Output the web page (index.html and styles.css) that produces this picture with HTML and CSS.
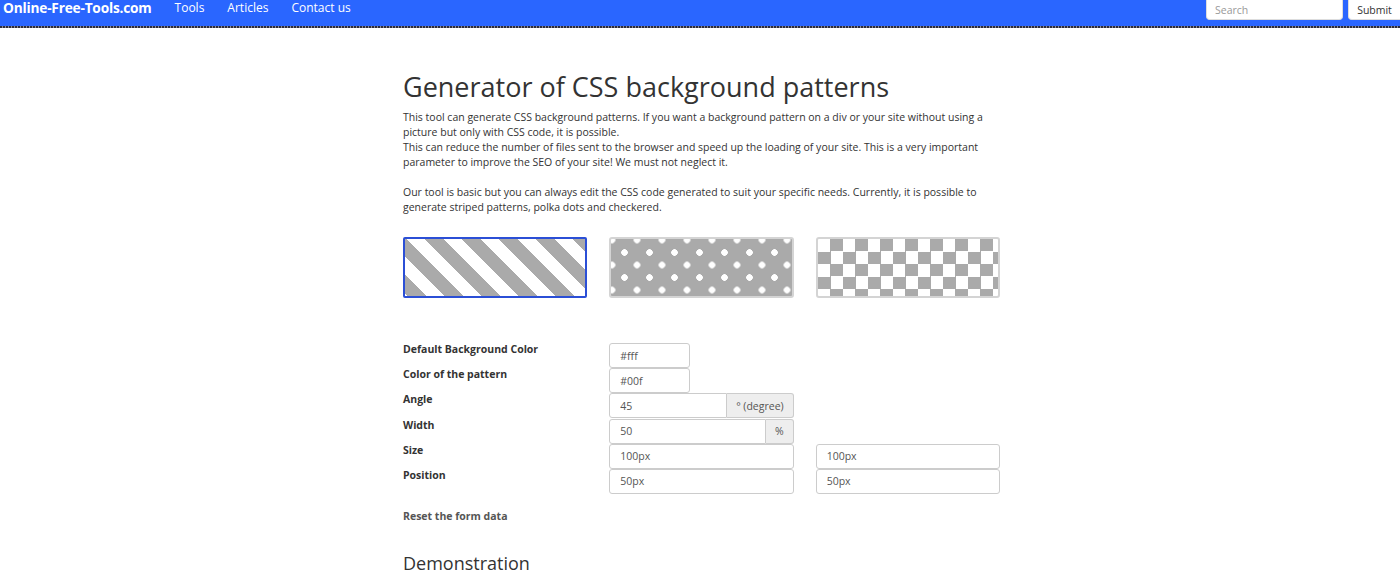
FILE: index.html
```html
<!DOCTYPE html>
<html lang="en">
<head>
<meta charset="utf-8">
<title>Generator of CSS background patterns</title>
<link rel="stylesheet" href="styles.css">
</head>
<body>
<header class="navbar">
  <div class="nav-left">
    <a class="brand" href="#">Online-Free-Tools.com</a>
    <a class="nav-link" href="#">Tools</a>
    <a class="nav-link" href="#">Articles</a>
    <a class="nav-link" href="#">Contact us</a>
  </div>
  <form class="nav-search">
    <input class="search-input" type="text" placeholder="Search">
    <button class="search-btn" type="button">Submit</button>
  </form>
</header>
<div class="nav-edge"></div>

<main class="container">
  <h1 class="title">Generator of CSS background patterns</h1>
  <p class="intro">This tool can generate CSS background patterns. If you want a background pattern on a div or your site without using a picture but only with CSS code, it is possible.<br>This can reduce the number of files sent to the browser and speed up the loading of your site. This is a very important parameter to improve the SEO of your site! We must not neglect it.<br><br>Our tool is basic but you can always edit the CSS code generated to suit your specific needs. Currently, it is possible to generate striped patterns, polka dots and checkered.</p>

  <div class="patterns">
    <div class="pattern stripes active"></div>
    <div class="pattern dots"></div>
    <div class="pattern checker"></div>
  </div>

  <div class="form-grid">
    <label class="label">Default Background Color</label>
    <div class="field"><input class="input short" type="text" value="#fff"></div>
    <div></div>

    <label class="label">Color of the pattern</label>
    <div class="field"><input class="input short" type="text" value="#00f"></div>
    <div></div>

    <label class="label">Angle</label>
    <div class="field group"><input class="input grow" type="text" value="45"><span class="addon">° (degree)</span></div>
    <div></div>

    <label class="label">Width</label>
    <div class="field group"><input class="input grow" type="text" value="50"><span class="addon">%</span></div>
    <div></div>

    <label class="label">Size</label>
    <div class="field"><input class="input full" type="text" value="100px"></div>
    <div class="field"><input class="input full" type="text" value="100px"></div>

    <label class="label">Position</label>
    <div class="field"><input class="input full" type="text" value="50px"></div>
    <div class="field"><input class="input full" type="text" value="50px"></div>
  </div>

  <a class="reset" href="#">Reset the form data</a>

  <h2 class="subtitle">Demonstration</h2>
</main>
</body>
</html>
```
FILE: styles.css
```css
* { box-sizing: border-box; }
html, body { margin: 0; padding: 0; background: #fff; }
body {
  font-family: "Open Sans", "Liberation Sans", sans-serif;
  color: #333;
  overflow: hidden;
}
a { text-decoration: none; }

.navbar {
  height: 26px;
  background: #2a66ff;
  display: flex;
  justify-content: space-between;
  align-items: flex-start;
}
.nav-left {
  display: flex;
  align-items: flex-start;
  padding-left: 3px;
}
.brand {
  color: #fff;
  font-weight: 700;
  font-size: 13.7px;
  line-height: 15px;
  letter-spacing: -0.2px;
  margin-right: 23px;
}
.nav-link {
  color: #fff;
  font-size: 12px;
  line-height: 15px;
  margin-right: 22px;
}
.nav-link + .nav-link { margin-left: 1px; }
.nav-search {
  display: flex;
  gap: 5px;
  margin: 0;
}
.search-input {
  width: 137px;
  height: 20px;
  border: 1px solid #ddd;
  border-top: none;
  border-radius: 0 0 4px 4px;
  padding: 0 8px;
  font-family: inherit;
  font-size: 10.5px;
  color: #555;
  background: #fff;
}
.search-input::placeholder { color: #999; }
.search-btn {
  width: 52px;
  height: 20px;
  border: 1px solid #ddd;
  border-top: none;
  border-right: none;
  border-radius: 0 0 0 4px;
  background: #fff;
  font-family: inherit;
  font-size: 10.5px;
  color: #333;
  padding: 0;
}
.nav-edge {
  height: 2px;
  background: repeating-linear-gradient(90deg, #2b2b3a 0 2px, #8a8a96 2px 3px);
}

.container {
  width: 600px;
  margin: 0 auto;
  padding: 42px 0 0 3px;
}
.title {
  font-size: 27px;
  font-weight: 400;
  line-height: 34px;
  margin: 0 0 6px;
  color: #333;
}
.intro {
  font-size: 10.5px;
  line-height: 15px;
  margin: 0 0 22px;
  color: #333;
}

.patterns {
  display: grid;
  grid-template-columns: repeat(3, minmax(0, 1fr));
  gap: 22px;
}
.pattern {
  height: 61px;
  border: 2px solid #d4d4d4;
  border-radius: 3px;
}
.pattern.active { border-color: #2b4fd6; border-radius: 2px; }
.stripes {
  background: repeating-linear-gradient(45deg, #fff 0 2.1px, #aaa 2.1px 15.2px, #fff 15.2px 26.16px);
}
.dots {
  background-color: #aaa;
  background-image:
    radial-gradient(circle, #fff 3px, transparent 3.6px),
    radial-gradient(circle, #fff 3px, transparent 3.6px);
  background-size: 25px 25px;
  background-position: -11.5px -11.5px, 1px 1px;
}
.checker {
  background-color: #fff;
  background-image: conic-gradient(#aaa 25%, #fff 0 50%, #aaa 0 75%, #fff 0);
  background-size: 25px 25px;
  background-position: 0 0;
}

.form-grid {
  display: grid;
  grid-template-columns: repeat(3, minmax(0, 1fr));
  column-gap: 22px;
  margin-top: 45px;
}
.label {
  font-size: 10.5px;
  font-weight: 700;
  line-height: 15px;
  margin-top: -1px;
  color: #333;
}
.field { display: flex; height: 25.2px; }
.input {
  height: 25px;
  border: 1px solid #ccc;
  border-radius: 3px;
  padding: 0 10px;
  font-family: inherit;
  font-size: 10.5px;
  color: #555;
  background: #fff;
}
.input.short { width: 81px; }
.input.full { width: 100%; }
.group .input.grow {
  flex: 1;
  min-width: 0;
  border-radius: 3px 0 0 3px;
}
.addon {
  height: 25px;
  display: flex;
  align-items: center;
  padding: 0 9px;
  font-size: 10.5px;
  color: #555;
  background: #eee;
  border: 1px solid #ccc;
  border-left: none;
  border-radius: 0 3px 3px 0;
  white-space: nowrap;
}

.reset {
  display: block;
  margin-top: 15px;
  font-size: 10.5px;
  font-weight: 700;
  line-height: 15px;
  color: #555;
}
.subtitle {
  font-size: 18px;
  font-weight: 400;
  line-height: 24px;
  margin: 27px 0 0;
  color: #333;
}
```
